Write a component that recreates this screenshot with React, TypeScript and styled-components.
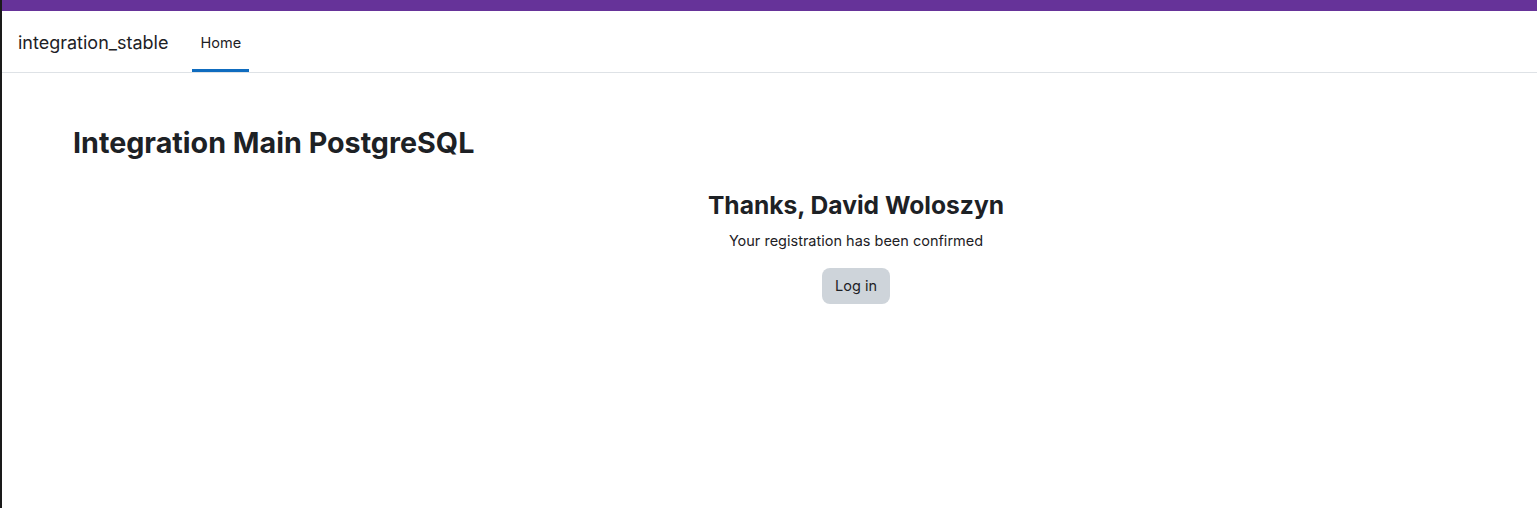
import * as React from "react";
import styled, { createGlobalStyle } from "styled-components";

const GlobalStyle = createGlobalStyle`
  html, body {
    margin: 0;
    padding: 0;
    background: #fff;
  }
  body {
    font-family: Inter, "Noto Sans", "Liberation Sans", sans-serif;
    color: #1d2125;
    border-left: 2px solid #1a1a1a;
    min-height: 100vh;
    box-sizing: border-box;
  }
`;

const Page = styled.div`
  display: flex;
  flex-direction: column;
`;

const TopStrip = styled.div`
  height: 11px;
  background: #663399;
`;

const Navbar = styled.nav`
  display: flex;
  align-items: stretch;
  height: 61px;
  padding: 0 16px;
  border-bottom: 1px solid #dee2e6;
  background: #fff;
`;

const Brand = styled.a`
  display: flex;
  align-items: center;
  padding-top: 2px;
  font-size: 18px;
  color: #1d2125;
  text-decoration: none;
  margin-right: 24px;
`;

const NavItem = styled.a<{ $active?: boolean }>`
  display: flex;
  align-items: center;
  padding: 4px 8px 0;
  font-size: 14.5px;
  color: #1d2125;
  text-decoration: none;
  border-bottom: 3px solid ${({ $active }) => ($active ? "#0f6cbf" : "transparent")};
`;

const Main = styled.main`
  padding: 0 73px 0 71px;
`;

const PageHeading = styled.h1`
  margin: 53px 0 0;
  font-size: 28.7px;
  font-weight: 700;
  line-height: 1.2;
`;

const ConfirmBox = styled.section`
  display: flex;
  flex-direction: column;
  align-items: center;
  padding-left: 175px;
  margin-top: 31px;
`;

const ThanksHeading = styled.h2`
  margin: 0;
  font-size: 24.6px;
  font-weight: 700;
  line-height: 1.2;
`;

const Message = styled.p`
  margin: 9px 0 0;
  font-size: 14.5px;
  line-height: 1.5;
`;

const LoginButton = styled.button`
  margin-top: 16px;
  height: 36px;
  padding: 0 13px;
  border: 0;
  border-radius: 8px;
  background: #ced4da;
  color: #1d2125;
  font-family: inherit;
  font-size: 14.5px;
  cursor: pointer;
`;

export default function App() {
  return (
    <Page>
      <GlobalStyle />
      <TopStrip />
      <Navbar>
        <Brand href="#">integration_stable</Brand>
        <NavItem href="#" $active>
          Home
        </NavItem>
      </Navbar>
      <Main>
        <PageHeading>Integration Main PostgreSQL</PageHeading>
        <ConfirmBox>
          <ThanksHeading>Thanks, David Woloszyn</ThanksHeading>
          <Message>Your registration has been confirmed</Message>
          <LoginButton>Log in</LoginButton>
        </ConfirmBox>
      </Main>
    </Page>
  );
}
